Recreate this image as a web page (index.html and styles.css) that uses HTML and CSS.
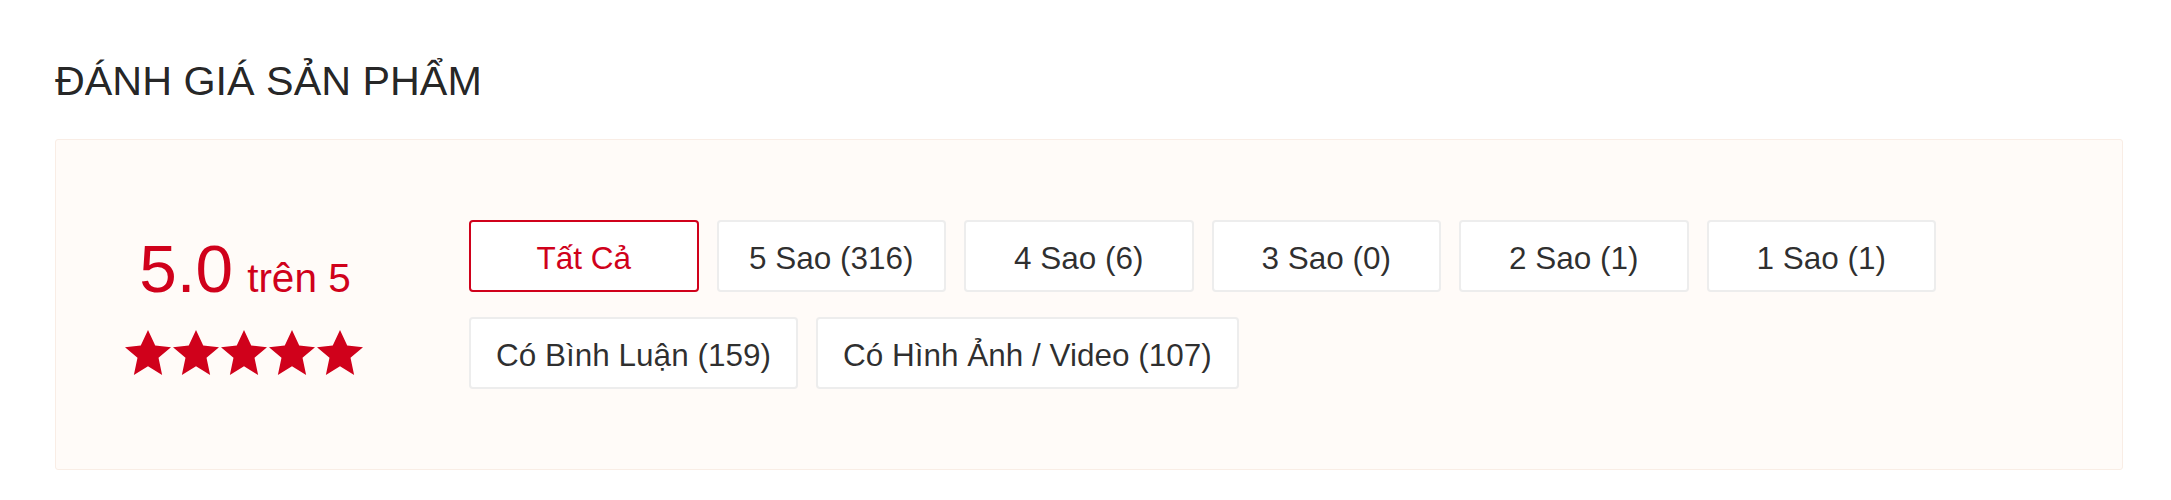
FILE: index.html
```html
<!DOCTYPE html>
<html lang="vi">
<head>
<meta charset="utf-8">
<title>Đánh giá sản phẩm</title>
<link rel="stylesheet" href="styles.css">
</head>
<body>
<section class="ratings">
  <h2 class="ratings-title">ĐÁNH GIÁ SẢN PHẨM</h2>
  <div class="overview">
    <div class="briefing">
      <div class="score">
        <span class="score-big">5.0</span>
        <span class="score-small">trên 5</span>
      </div>
      <div class="stars">
        <svg class="star" viewBox="0.5 0.8 14 13.4" preserveAspectRatio="none"><polygon points="7.5 .8 9.7 5.4 14.5 5.9 10.7 9.1 11.8 14.2 7.5 11.6 3.2 14.2 4.3 9.1 .5 5.9 5.3 5.4"/></svg>
        <svg class="star" viewBox="0.5 0.8 14 13.4" preserveAspectRatio="none"><polygon points="7.5 .8 9.7 5.4 14.5 5.9 10.7 9.1 11.8 14.2 7.5 11.6 3.2 14.2 4.3 9.1 .5 5.9 5.3 5.4"/></svg>
        <svg class="star" viewBox="0.5 0.8 14 13.4" preserveAspectRatio="none"><polygon points="7.5 .8 9.7 5.4 14.5 5.9 10.7 9.1 11.8 14.2 7.5 11.6 3.2 14.2 4.3 9.1 .5 5.9 5.3 5.4"/></svg>
        <svg class="star" viewBox="0.5 0.8 14 13.4" preserveAspectRatio="none"><polygon points="7.5 .8 9.7 5.4 14.5 5.9 10.7 9.1 11.8 14.2 7.5 11.6 3.2 14.2 4.3 9.1 .5 5.9 5.3 5.4"/></svg>
        <svg class="star" viewBox="0.5 0.8 14 13.4" preserveAspectRatio="none"><polygon points="7.5 .8 9.7 5.4 14.5 5.9 10.7 9.1 11.8 14.2 7.5 11.6 3.2 14.2 4.3 9.1 .5 5.9 5.3 5.4"/></svg>
      </div>
    </div>
    <div class="filters">
      <div class="filter filter-active">Tất Cả</div>
      <div class="filter">5 Sao (316)</div>
      <div class="filter">4 Sao (6)</div>
      <div class="filter">3 Sao (0)</div>
      <div class="filter">2 Sao (1)</div>
      <div class="filter">1 Sao (1)</div>
      <div class="filter">Có Bình Luận (159)</div>
      <div class="filter">Có Hình Ảnh / Video (107)</div>
    </div>
  </div>
</section>
</body>
</html>
```

FILE: styles.css
```css
html, body {
  margin: 0;
  padding: 0;
  background: #ffffff;
}

body {
  font-family: "Liberation Sans", Arial, Helvetica, sans-serif;
}

.ratings {
  padding: 57px 48px 0 55px;
}

.ratings-title {
  margin: 0 0 35px 0;
  padding-top: 1px;
  font-size: 41.3px;
  font-weight: 400;
  line-height: 46px;
  color: rgba(0, 0, 0, 0.87);
  text-transform: uppercase;
}

.overview {
  display: flex;
  align-items: center;
  background: #fffbf8;
  border: 1px solid #f9ede5;
  border-radius: 3px;
  padding: 67.5px;
}

.briefing {
  flex-shrink: 0;
  width: 240px;
  margin-right: 105.5px;
  margin-bottom: 4px;
  display: flex;
  flex-direction: column;
  align-items: center;
}

.score {
  display: flex;
  align-items: baseline;
  justify-content: center;
  gap: 14px;
  color: #d0011b;
  padding-left: 3px;
}

.score-big {
  font-size: 67.5px;
  line-height: normal;
}

.score-small {
  font-size: 40.5px;
  line-height: normal;
}

.stars {
  display: flex;
  gap: 2px;
  margin-top: 23px;
}

.star {
  display: block;
  width: 46px;
  height: 45px;
  fill: #d0011b;
}

.filters {
  flex: 1;
  display: flex;
  flex-wrap: wrap;
  gap: 25px 18px;
  padding: 12.5px 0;
}

.filter {
  box-sizing: border-box;
  min-width: 229.5px;
  height: 72px;
  padding: 4px 25px 0;
  display: flex;
  align-items: center;
  justify-content: center;
  background: #ffffff;
  border: 2px solid rgba(0, 0, 0, 0.07);
  border-radius: 4px;
  font-size: 31.5px;
  color: rgba(0, 0, 0, 0.82);
  white-space: nowrap;
}

.filter-active {
  color: #d0011b;
  border-color: #d0011b;
}
```
